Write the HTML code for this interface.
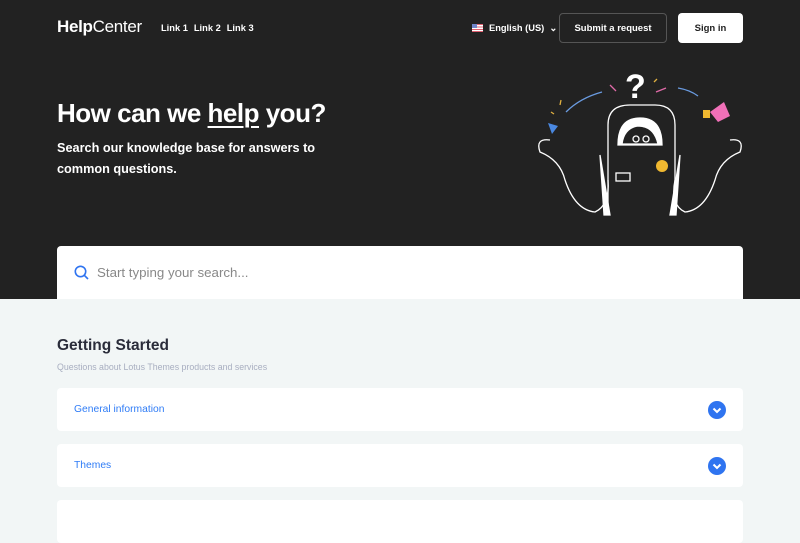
<!DOCTYPE html>
<html><head><meta charset="utf-8"><style>
*{margin:0;padding:0;box-sizing:border-box}
body{width:800px;height:514px;overflow:hidden;font-family:"Liberation Sans",sans-serif;background:#f2f6f6;position:relative}
.hero{position:absolute;left:0;top:0;width:800px;height:299px;background:#222222}
.logo{position:absolute;left:57px;top:17px;color:#fff;font-size:17px;letter-spacing:-0.3px}
.logo b{font-weight:700}
.links{position:absolute;left:161px;top:23px;color:#fff;font-size:9.3px;font-weight:700}
.links span{margin-right:6px}
.lang{position:absolute;left:472px;top:23px;color:#fff;font-size:9.3px;font-weight:700}
.flag{display:inline-block;width:11px;height:8px;background:repeating-linear-gradient(#e06070 0 1.2px,#fff 1.2px 2.4px);position:relative;vertical-align:-1px;margin-right:6px}
.flag:before{content:"";position:absolute;left:0;top:0;width:5px;height:4px;background:#6f84c8}
.btn1{position:absolute;left:559px;top:13px;width:108px;height:30px;border:1px solid #555;border-radius:4px;color:#fff;font-size:9.5px;font-weight:700;text-align:center;line-height:30px}
.btn2{position:absolute;left:678px;top:13px;width:65px;height:30px;background:#fff;border-radius:4px;color:#222;font-size:9.5px;font-weight:700;text-align:center;line-height:31px}
h1{position:absolute;left:57px;top:98px;color:#fff;font-size:26px;font-weight:700;letter-spacing:-0.5px}
h1 u{text-decoration-thickness:2px;text-underline-offset:4px}
.sub{position:absolute;left:57px;top:138px;color:#fff;font-size:12.7px;line-height:21px;font-weight:700;width:300px}
.search{position:absolute;left:57px;top:246px;width:686px;height:53px;background:#fff;border-radius:4px 4px 0 0}
.search span{position:absolute;left:40px;top:19px;font-size:13.3px;color:#888}
h2{position:absolute;left:57px;top:337px;font-size:15.5px;color:#2a2c3a;font-weight:700}
.desc{position:absolute;left:57px;top:362px;font-size:8.8px;color:#a8aec0}
.card{position:absolute;left:57px;width:686px;height:43px;background:#fff;border-radius:4px}
.card span{position:absolute;left:17px;top:16px;font-size:10.3px;color:#2f7cf6}
.chev{position:absolute;left:651px;top:13px;width:18px;height:18px;border-radius:50%;background:#2f74f0}
</style></head><body>
<div class="hero">
<div class="logo"><b>Help</b>Center</div>
<div class="links"><span>Link 1</span><span>Link 2</span><span>Link 3</span></div>
<div class="lang"><span class="flag"></span>English (US) &nbsp;⌄</div>
<div class="btn1">Submit a request</div>
<div class="btn2">Sign in</div>
<h1>How can we <u>help</u> you?</h1>
<div class="sub">Search our knowledge base for answers to common questions.</div>
<svg style="position:absolute;left:520px;top:60px" width="240" height="170" viewBox="0 0 240 170" fill="none" stroke="#fff" stroke-width="1.3">
<text x="105" y="38" fill="#fff" stroke="none" font-size="34" font-family="Liberation Sans" font-weight="700">?</text>
<path d="M46 52 Q60 38 82 32" stroke="#6a9be0"/><path d="M158 28 Q170 30 178 36" stroke="#6a9be0"/>
<path d="M90 25 l6 6 M136 32 l10 -4" stroke="#e06aa8"/><path d="M134 22 l3 -3 M40 45 l1 -5 M31 52 l3 2" stroke="#e0b040"/>
<polygon points="28,63 38,66 32,74" fill="#4a88e0" stroke="none"/>
<polygon points="190,52 204,42 210,56 198,62" fill="#f070b8" stroke="none"/>
<rect x="183" y="50" width="7" height="8" fill="#f0b830" stroke="none"/>
<path d="M88 155 V65 Q88 45 110 45 H135 Q155 45 155 65 V155"/>
<path d="M98 85 Q98 58 120 58 Q142 58 142 85 Z" fill="#fff"/>
<path d="M102 84 Q104 68 118 66 Q134 66 138 84 Z" fill="#222"/>
<circle cx="116" cy="79" r="3"/><circle cx="126" cy="79" r="3"/>
<circle cx="142" cy="106" r="6" fill="#f0b830" stroke="none"/>
<rect x="96" y="113" width="14" height="8"/>
<path d="M30 80 Q15 78 20 92 Q40 100 45 120 Q55 150 75 152 Q90 145 88 120"/>
<path d="M210 80 Q225 78 220 92 Q200 100 195 120 Q185 150 165 152 Q150 145 155 120"/>
<path d="M80 95 L84 155 L90 155 Z M160 95 L156 155 L150 155 Z" fill="#fff"/>
</svg>
</div>
<div class="search">
<svg style="position:absolute;left:17px;top:19px" width="15" height="15" viewBox="0 0 15 15" fill="none" stroke="#2f74f0" stroke-width="1.6"><circle cx="6.5" cy="6.5" r="5.2"/><path d="M10.3 10.3 L14 14"/></svg>
<span>Start typing your search...</span></div>
<h2>Getting Started</h2>
<div class="desc">Questions about Lotus Themes products and services</div>
<div class="card" style="top:388px"><span>General information</span><svg class="chev" viewBox="0 0 18 18"><path d="M5.5 7.5 L9 11 L12.5 7.5" fill="none" stroke="#fff" stroke-width="2"/></svg></div>
<div class="card" style="top:444px"><span>Themes</span><svg class="chev" viewBox="0 0 18 18"><path d="M5.5 7.5 L9 11 L12.5 7.5" fill="none" stroke="#fff" stroke-width="2"/></svg></div>
<div class="card" style="top:500px"></div>
</body></html>
